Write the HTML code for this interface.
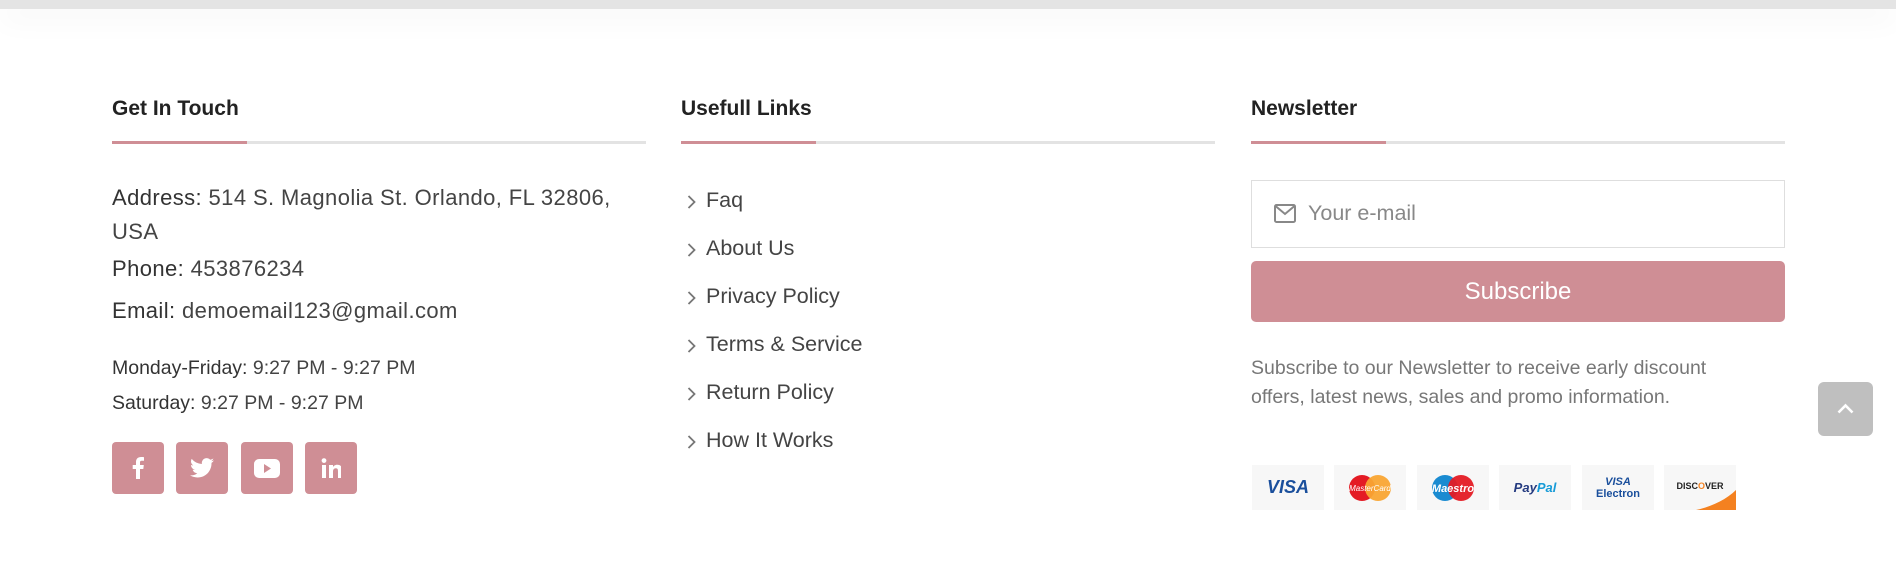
<!DOCTYPE html>
<html><head><meta charset="utf-8"><style>
*{margin:0;padding:0;box-sizing:border-box}
body{width:1896px;height:577px;background:#fff;font-family:"Liberation Sans",sans-serif;position:relative;overflow:hidden;color:#444}
.topbar{position:absolute;left:0;top:0;width:1896px;height:9px;background:#e4e4e4;box-shadow:0 8px 30px rgba(0,0,0,.07)}
.abs{position:absolute;white-space:nowrap}
h3{position:absolute;font-size:21px;font-weight:600;color:#222;top:97px}
.line{position:absolute;top:141px;height:3px;width:534px;background:#e3e3e3}
.line i{display:block;width:135px;height:3px;background:#cf8e95}
.t20{font-size:22px;color:#444;letter-spacing:.4px}
.t20 b{font-weight:normal;color:#333}
.hrs{font-size:19.5px;color:#444}
.soc{position:absolute;top:442px;width:52px;height:52px;background:#cf8e95;border-radius:4px;display:flex;align-items:center;justify-content:center}
.lk{position:absolute;left:687px;font-size:21.5px;color:#444}
.lk svg{position:absolute;left:0;top:7px}
.lk span{position:absolute;left:19px;top:0;white-space:nowrap}
.card{position:absolute;top:465px;width:72px;height:45px;background:#f7f7f7;overflow:hidden;display:flex;align-items:center;justify-content:center}
</style></head><body>
<div class="topbar"></div>

<h3 style="left:112px">Get In Touch</h3>
<div class="line" style="left:112px"><i></i></div>
<div class="abs t20" style="left:112px;top:181px;line-height:34px;white-space:normal;width:520px"><b>Address:</b> 514 S. Magnolia St. Orlando, FL 32806, USA</div>
<div class="abs t20" style="left:112px;top:256px"><b>Phone:</b> 453876234</div>
<div class="abs t20" style="left:112px;top:298px"><b>Email:</b> demoemail123@gmail.com</div>
<div class="abs hrs" style="left:112px;top:357px"><span style="color:#333">Monday-Friday:</span> 9:27 PM - 9:27 PM</div>
<div class="abs hrs" style="left:112px;top:392px"><span style="color:#333">Saturday:</span> 9:27 PM - 9:27 PM</div>

<div class="soc" style="left:112px"><svg width="12" height="22" viewBox="0 0 12 22"><path d="M8 22V12h3.3l.5-4H8V5.6c0-1.1.3-1.9 1.9-1.9H12V.2C11.6.1 10.4 0 9 0 6 0 4 1.8 4 5.1V8H.7v4H4v10z" fill="#fff"/></svg></div>
<div class="soc" style="left:176px"><svg width="24" height="20" viewBox="0 0 24 20"><path d="M24 2.4c-.9.4-1.8.6-2.8.8 1-.6 1.8-1.6 2.2-2.7-1 .6-2 1-3.1 1.2A4.9 4.9 0 0 0 11.9 6 14 14 0 0 1 1.7.9a4.9 4.9 0 0 0 1.5 6.6c-.8 0-1.6-.3-2.2-.6 0 2.4 1.7 4.4 3.9 4.8-.7.2-1.5.2-2.2.1.6 2 2.4 3.4 4.6 3.4A9.9 9.9 0 0 1 0 17.3 14 14 0 0 0 7.5 19.5c9.1 0 14-7.5 14-14v-.6c1-.7 1.8-1.6 2.5-2.5z" fill="#fff"/></svg></div>
<div class="soc" style="left:241px"><svg width="26" height="19" viewBox="0 0 26 19"><rect x="0" y="0" width="26" height="19" rx="5" fill="#fff"/><path d="M10 5l7 4.5-7 4.5z" fill="#cf8e95"/></svg></div>
<div class="soc" style="left:305px"><svg width="20" height="20" viewBox="0 0 20 20"><rect x="1" y="7" width="4" height="13" fill="#fff"/><circle cx="3" cy="2.6" r="2.4" fill="#fff"/><path d="M8 7h4v2c.6-1.1 2-2.3 4.2-2.3 4 0 4.8 2.6 4.8 6V20h-4v-6.4c0-1.5 0-3.4-2.1-3.4S12 11.8 12 13.5V20H8z" fill="#fff"/></svg></div>

<h3 style="left:681px">Usefull Links</h3>
<div class="line" style="left:681px"><i></i></div>
<div class="lk" style="top:188px"><svg width="9" height="14" viewBox="0 0 9 14"><path d="M1.5 1l6 6-6 6" stroke="#777" stroke-width="1.8" fill="none"/></svg><span>Faq</span></div>
<div class="lk" style="top:236px"><svg width="9" height="14" viewBox="0 0 9 14"><path d="M1.5 1l6 6-6 6" stroke="#777" stroke-width="1.8" fill="none"/></svg><span>About Us</span></div>
<div class="lk" style="top:284px"><svg width="9" height="14" viewBox="0 0 9 14"><path d="M1.5 1l6 6-6 6" stroke="#777" stroke-width="1.8" fill="none"/></svg><span>Privacy Policy</span></div>
<div class="lk" style="top:332px"><svg width="9" height="14" viewBox="0 0 9 14"><path d="M1.5 1l6 6-6 6" stroke="#777" stroke-width="1.8" fill="none"/></svg><span>Terms &amp; Service</span></div>
<div class="lk" style="top:380px"><svg width="9" height="14" viewBox="0 0 9 14"><path d="M1.5 1l6 6-6 6" stroke="#777" stroke-width="1.8" fill="none"/></svg><span>Return Policy</span></div>
<div class="lk" style="top:428px"><svg width="9" height="14" viewBox="0 0 9 14"><path d="M1.5 1l6 6-6 6" stroke="#777" stroke-width="1.8" fill="none"/></svg><span>How It Works</span></div>

<h3 style="left:1251px">Newsletter</h3>
<div class="line" style="left:1251px"><i></i></div>
<div class="abs" style="left:1251px;top:180px;width:534px;height:68px;border:1px solid #dedede"></div>
<svg class="abs" style="left:1274px;top:204px" width="22" height="19" viewBox="0 0 22 19"><rect x="1" y="1" width="20" height="17" rx="1.5" fill="none" stroke="#888" stroke-width="2"/><path d="M1.5 2l9.5 8 9.5-8" fill="none" stroke="#888" stroke-width="2"/></svg>
<div class="abs" style="left:1308px;top:201px;font-size:21.5px;color:#888">Your e-mail</div>
<div class="abs" style="left:1251px;top:261px;width:534px;height:61px;background:#cf8e95;border-radius:5px;color:#fff;font-size:24px;text-align:center;line-height:61px">Subscribe</div>
<div class="abs" style="left:1251px;top:354px;font-size:19.5px;color:#777;line-height:29px;white-space:normal;width:470px">Subscribe to our Newsletter to receive early discount offers, latest news, sales and promo information.</div>

<div class="card" style="left:1252px"><span style="font:italic bold 18px 'Liberation Sans',sans-serif;color:#1a4f9c">VISA</span></div>
<div class="card" style="left:1334px"><svg width="44" height="28"><circle cx="14" cy="14" r="13" fill="#e41b24"/><circle cx="30" cy="14" r="13" fill="#f9a533" opacity=".95"/><text x="22" y="17" font-size="8" fill="#fff" text-anchor="middle" font-family="Liberation Sans" font-style="italic">MasterCard</text></svg></div>
<div class="card" style="left:1417px"><svg width="44" height="28"><circle cx="14" cy="14" r="13" fill="#1a8bd1"/><circle cx="30" cy="14" r="13" fill="#e41b24" opacity=".95"/><text x="22" y="18" font-size="11" fill="#fff" text-anchor="middle" font-family="Liberation Sans" font-style="italic" font-weight="bold">Maestro</text></svg></div>
<div class="card" style="left:1499px"><span style="font:italic bold 13px 'Liberation Sans',sans-serif;color:#253b80">Pay<span style="color:#179bd7">Pal</span></span></div>
<div class="card" style="left:1582px;flex-direction:column;line-height:14px"><span style="font:italic bold 11px 'Liberation Sans',sans-serif;color:#1a4f9c">VISA</span><span style="font:bold 11px 'Liberation Sans',sans-serif;color:#1a4f9c">Electron</span></div>
<div class="card" style="left:1664px"><span style="font:bold 9px 'Liberation Sans',sans-serif;color:#222;position:relative;top:-2px">DISC<span style="color:#f48120">O</span>VER</span><svg style="position:absolute;right:0;bottom:0" width="46" height="20"><path d="M46 0V20H6C20 17 36 10 46 0z" fill="#f48120"/></svg></div>

<div class="abs" style="left:1818px;top:382px;width:55px;height:54px;background:#bfbfbf;border-radius:6px"><svg style="position:absolute;left:19px;top:21px" width="17" height="11" viewBox="0 0 17 11"><path d="M1.5 9.5l7-7 7 7" stroke="#fff" stroke-width="2.6" fill="none"/></svg></div>
</body></html>
